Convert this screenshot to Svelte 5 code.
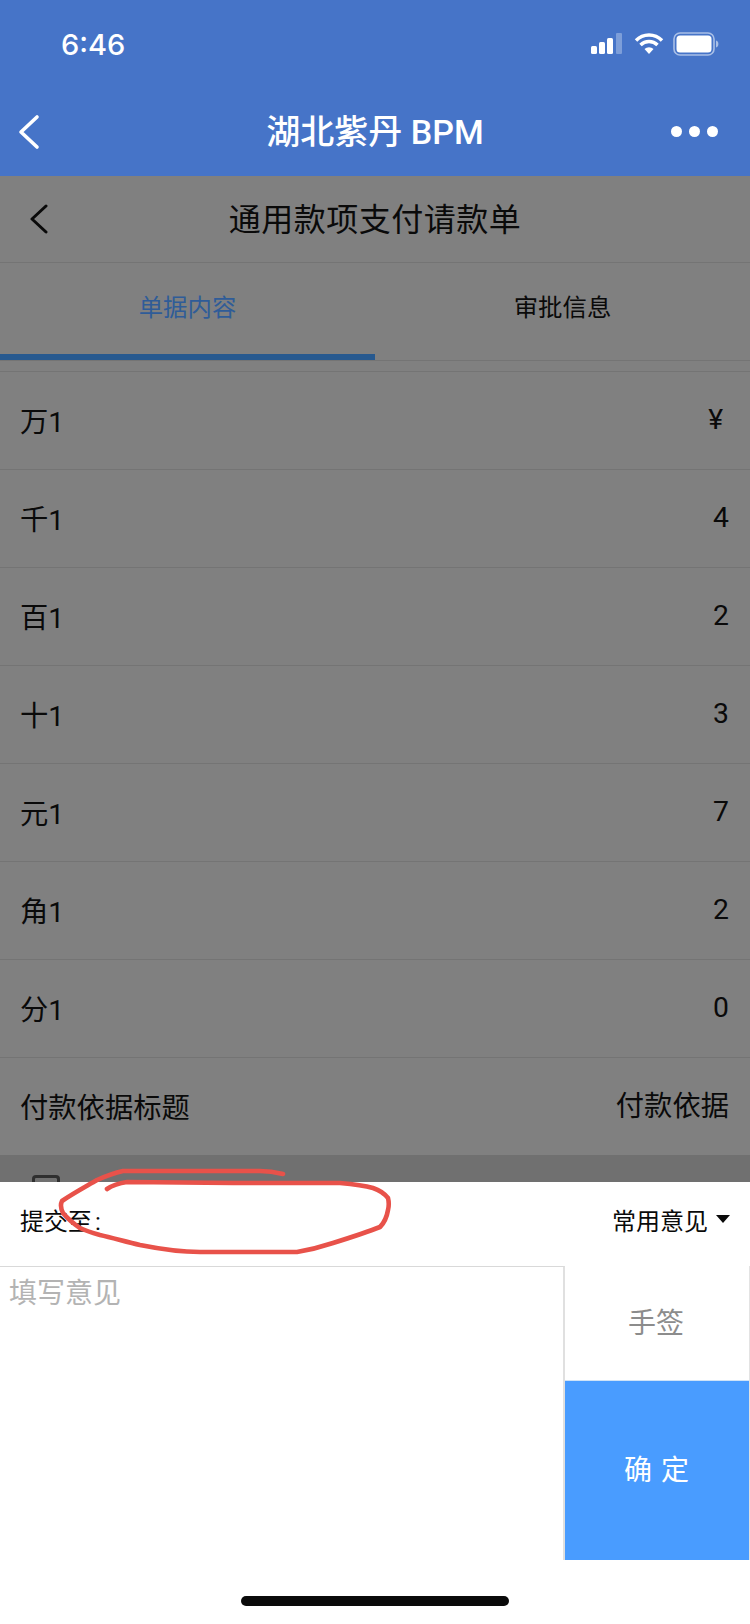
<script lang="ts">
	const rows = [
		{ label: '万1', value: '¥' },
		{ label: '千1', value: '4' },
		{ label: '百1', value: '2' },
		{ label: '十1', value: '3' },
		{ label: '元1', value: '7' },
		{ label: '角1', value: '2' },
		{ label: '分1', value: '0' },
		{ label: '付款依据标题', value: '付款依据' }
	];
</script>

<div class="phone">
	<header class="app-bar">
		<div class="status">
			<span class="time">6:46</span>
			<div class="status-icons">
				<svg width="34" height="22" viewBox="0 0 34 22">
					<rect x="0" y="13" width="6" height="8" rx="1.5" fill="#fff" />
					<rect x="8" y="9" width="6" height="12" rx="1.5" fill="#fff" />
					<rect x="16" y="5" width="6" height="16" rx="1.5" fill="#fff" />
					<rect x="25" y="0" width="6" height="21" rx="1" fill="#7d9ed9" />
				</svg>
				<svg width="30" height="22" viewBox="0 0 30 22">
					<path d="M2 7.5a18 18 0 0 1 26 0M6.5 12a12 12 0 0 1 17 0" fill="none" stroke="#fff" stroke-width="3.4" />
					<path d="M10.5 16a6.5 6.5 0 0 1 9 0L15 21z" fill="#fff" />
				</svg>
				<svg width="46" height="24" viewBox="0 0 46 24">
					<rect x="1" y="1" width="40" height="22" rx="6" fill="none" stroke="#a9bfe6" stroke-width="1.6" />
					<rect x="3.5" y="3.5" width="35" height="17" rx="3.5" fill="#fff" />
					<path d="M43 8.5c1.6.4 2.4 1.8 2.4 3.5s-.8 3.1-2.4 3.5z" fill="#a9bfe6" />
				</svg>
			</div>
		</div>
		<div class="nav">
			<svg class="nav-back" width="24" height="36" viewBox="0 0 24 36">
				<path d="M20 3 4 18l16 15" fill="none" stroke="#fff" stroke-width="3.6" stroke-linecap="round" stroke-linejoin="round" />
			</svg>
			<h1>湖北紫丹 BPM</h1>
			<div class="dots"><i></i><i></i><i></i></div>
		</div>
	</header>

	<main class="page">
		<div class="title-bar">
			<svg class="title-back" width="20" height="30" viewBox="0 0 20 30">
				<path d="M17 2 3 15l14 13" fill="none" stroke="#0a0a0a" stroke-width="3" stroke-linecap="round" stroke-linejoin="round" />
			</svg>
			<h2>通用款项支付请款单</h2>
		</div>
		<div class="tabs">
			<div class="tab active">单据内容</div>
			<div class="tab">审批信息</div>
		</div>
		<div class="rows">
			{#each rows as row}
				<div class="row">
					<span>{row.label}</span>
					<span class="value" class:currency={row.value === '¥'}>{row.value}</span>
				</div>
			{/each}
		</div>
		<div class="strip"><span class="strip-icon"></span></div>
	</main>

	<section class="sheet">
		<div class="sheet-head">
			<span class="submit-to">提交至 :</span>
			<span class="common">常用意见<i class="caret"></i></span>
		</div>
		<div class="sheet-body">
			<div class="opinion">填写意见</div>
			<div class="actions">
				<div class="sign">手签</div>
				<div class="confirm">确 定</div>
			</div>
		</div>
		<div class="home"><span></span></div>
	</section>

	<svg class="scribble" width="750" height="1624" viewBox="0 0 750 1624">
		<path d="M283 1174C275 1172 268 1171 260 1171L123 1171C114 1173 106 1176 97 1180C85 1187 72 1194 62 1201C60 1205 61 1209 63 1213C68 1219 74 1224 80 1228C86 1231 93 1233 100 1235C113 1238 127 1242 140 1245C160 1249 180 1252 200 1252L297 1252C309 1250 321 1247 333 1243C349 1238 365 1233 380 1227C385 1222 387 1216 388 1210C389 1206 389 1202 388 1198C384 1193 379 1190 373 1188C362 1185 351 1184 340 1183L233 1183L127 1182C120 1183 113 1185 107 1189" fill="none" stroke="#e8524a" stroke-width="4.6" stroke-linecap="round" stroke-linejoin="round" />
	</svg>
</div>

<style>
	:global(body) {
		margin: 0;
		background: #fff;
	}

	.phone {
		position: relative;
		display: flex;
		flex-direction: column;
		width: 750px;
		height: 1624px;
		overflow: hidden;
		font-family: 'Roboto', 'Noto Sans CJK SC', sans-serif;
		color: #0a0a0a;
	}

	.app-bar {
		height: 176px;
		flex: none;
		background: #4674c8;
		color: #fff;
	}

	.status {
		display: flex;
		align-items: center;
		justify-content: space-between;
		height: 88px;
		padding: 0 31px 0 61px;
	}

	.time {
		font-family: 'Inter', sans-serif;
		font-size: 29px;
		font-weight: 500;
	}

	.status-icons {
		display: flex;
		align-items: center;
		gap: 9px;
	}

	.nav {
		position: relative;
		display: flex;
		align-items: center;
		justify-content: center;
		height: 88px;
	}

	.nav h1 {
		margin: 0;
		font-size: 34px;
		font-weight: 500;
		line-height: 1;
	}

	.nav-back {
		position: absolute;
		left: 17px;
		top: 26px;
	}

	.dots {
		position: absolute;
		right: 32px;
		top: 38px;
		display: flex;
		gap: 7px;
	}

	.dots i {
		width: 11px;
		height: 11px;
		border-radius: 50%;
		background: #fff;
	}

	.page {
		flex: 1;
		min-height: 0;
		overflow: hidden;
		background: #808080;
	}

	.title-bar {
		position: relative;
		display: flex;
		align-items: center;
		justify-content: center;
		height: 87px;
		padding-top: 2px;
		border-bottom: 1px solid #747474;
		box-sizing: border-box;
	}

	.title-bar h2 {
		margin: 0;
		font-size: 32px;
		font-weight: 400;
		line-height: 1;
		letter-spacing: 0.5px;
	}

	.title-back {
		position: absolute;
		left: 29px;
		top: 28px;
	}

	.tabs {
		display: flex;
		height: 98px;
		box-sizing: border-box;
		border-bottom: 1px solid #747474;
	}

	.tab {
		flex: 1;
		display: flex;
		align-items: center;
		justify-content: center;
		font-size: 24.4px;
		padding-bottom: 12px;
		box-sizing: border-box;
		height: 97px;
	}

	.tab.active {
		color: #2f5c98;
		border-bottom: 6px solid #27598f;
		padding-bottom: 6px;
	}

	.rows {
		margin-top: 10px;
		border-top: 1px solid #747474;
	}

	.row {
		display: flex;
		align-items: center;
		justify-content: space-between;
		height: 98px;
		box-sizing: border-box;
		padding: 0 21px 2px 20px;
		font-size: 28.3px;
		border-bottom: 1px solid #747474;
	}

	.row:last-child {
		height: 97px;
		border-bottom: 0;
	}

	.row:last-child .value {
		position: relative;
		top: -2px;
	}

	.currency {
		margin-right: 6px;
	}

	.strip {
		height: 30px;
		background: #707070;
		padding: 20px 0 0 32px;
		box-sizing: border-box;
	}

	.strip-icon {
		display: block;
		width: 28px;
		height: 20px;
		border: 3px solid #2f2f2f;
		border-radius: 4px;
		box-sizing: border-box;
		border-bottom: 0;
	}

	.sheet {
		flex: none;
		height: 442px;
		background: #fff;
		display: flex;
		flex-direction: column;
	}

	.sheet-head {
		display: flex;
		align-items: center;
		justify-content: space-between;
		height: 84px;
		padding: 0 20px 10px 20px;
		font-size: 24px;
		box-sizing: border-box;
	}

	.submit-to {
		word-spacing: -3px;
	}

	.common {
		display: flex;
		align-items: center;
	}

	.caret {
		margin-left: 8px;
		border-left: 7px solid transparent;
		border-right: 7px solid transparent;
		border-top: 8px solid #0a0a0a;
	}

	.sheet-body {
		display: flex;
		height: 294px;
	}

	.opinion {
		width: 565px;
		box-sizing: border-box;
		border-top: 1px solid #d9d9d9;
		border-right: 2px solid #e0e0e0;
		padding: 8px 9px;
		font-size: 28px;
		line-height: 38px;
		color: #b3b3b3;
	}

	.actions {
		width: 184px;
		display: flex;
		flex-direction: column;
		border-right: 1px solid #e3e3e3;
	}

	.sign {
		height: 114px;
		flex: none;
		display: flex;
		align-items: center;
		justify-content: center;
		padding: 0 2px 4px 0;
		box-sizing: border-box;
		font-size: 28px;
		color: #8c8c8c;
	}

	.confirm {
		flex: 1;
		display: flex;
		align-items: center;
		justify-content: center;
		padding-bottom: 6px;
		background: #499cff;
		color: #fff;
		font-size: 28px;
		border-top: 1px solid #cfe3f7;
		letter-spacing: 1px;
		white-space: pre;
	}

	.home {
		flex: 1;
		display: flex;
		align-items: center;
		justify-content: center;
		padding-top: 18px;
	}

	.home span {
		width: 268px;
		height: 10px;
		border-radius: 5px;
		background: #0a0a0a;
	}

	.scribble {
		position: absolute;
		left: 0;
		top: 0;
		pointer-events: none;
	}
</style>
